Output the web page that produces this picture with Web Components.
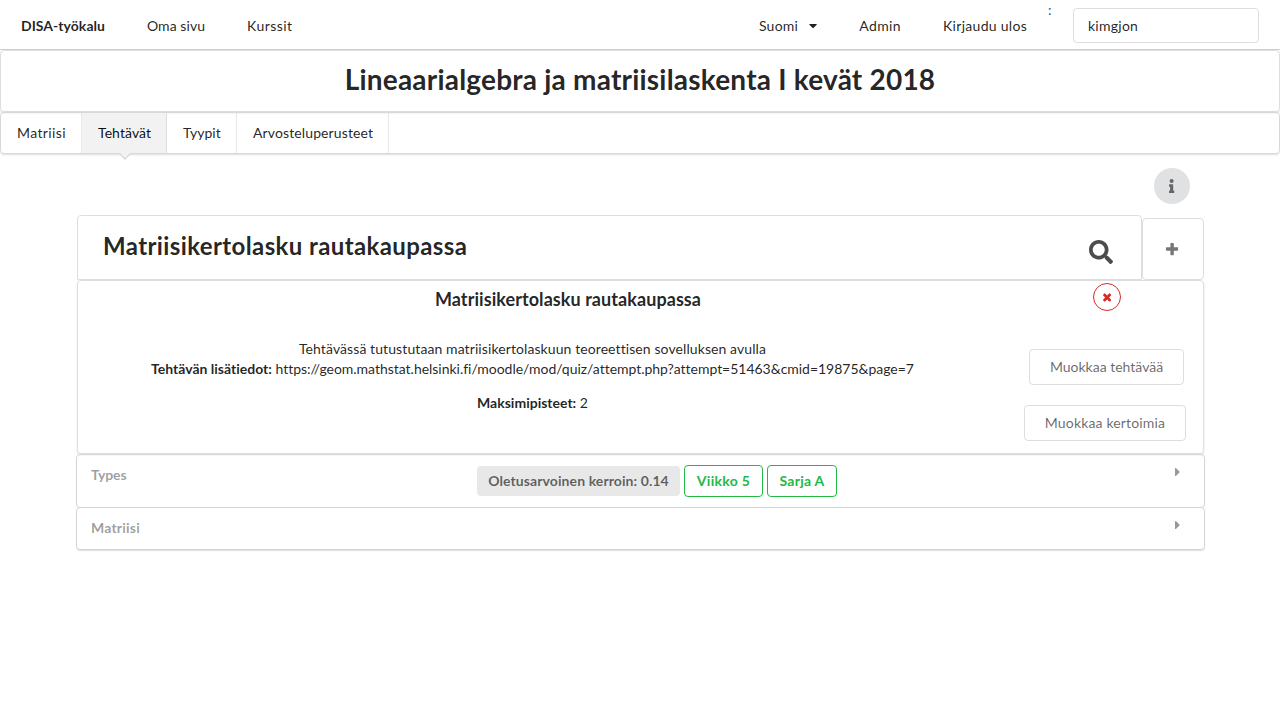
<!DOCTYPE html>
<html lang="fi">
<head>
<meta charset="utf-8">
<title>DISA-työkalu</title>
<style>
html, body { margin: 0; height: 100%; background: #fff; }
body { font: 14px/20px Lato, "Liberation Sans", sans-serif; color: rgba(0,0,0,.87); font-variant-ligatures: none; }
</style>
</head>
<body>
<disa-app></disa-app>
<script>
const define = (name, css, html) => customElements.define(name, class extends HTMLElement {
  constructor() {
    super();
    this.attachShadow({ mode: 'open' }).innerHTML = `<style>*{box-sizing:border-box}${css}</style>${html}`;
  }
});

const ICONS = {
  search: [512, 'M505 442.7L405.3 343c-4.5-4.5-10.6-7-17-7H372c27.6-35.3 44-79.7 44-128C416 93.1 322.9 0 208 0S0 93.1 0 208s93.1 208 208 208c48.3 0 92.7-16.4 128-44v16.3c0 6.4 2.5 12.5 7 17l99.7 99.7c9.4 9.4 24.6 9.4 33.9 0l28.3-28.3c9.4-9.4 9.4-24.6.1-34zM208 336c-70.7 0-128-57.2-128-128 0-70.7 57.2-128 128-128 70.7 0 128 57.2 128 128 0 70.7-57.2 128-128 128z'],
  info: [192, 'M20 424.229h20V279.771H20c-11.046 0-20-8.954-20-20V212c0-11.046 8.954-20 20-20h112c11.046 0 20 8.954 20 20v212.229h20c11.046 0 20 8.954 20 20V492c0 11.046-8.954 20-20 20H20c-11.046 0-20-8.954-20-20v-47.771c0-11.046 8.954-20 20-20zM96 0C56.235 0 24 32.235 24 72s32.235 72 72 72 72-32.235 72-72S135.764 0 96 0z'],
  plus: [448, 'M448 294.2v-76.4c0-13.3-10.7-24-24-24H286.2V56c0-13.3-10.7-24-24-24h-76.4c-13.3 0-24 10.7-24 24v137.8H24c-13.3 0-24 10.7-24 24v76.4c0 13.3 10.7 24 24 24h137.8V456c0 13.3 10.7 24 24 24h76.4c13.3 0 24-10.7 24-24V318.2H424c13.3 0 24-10.7 24-24z'],
  close: [384, 'M323.1 441l53.9-53.9c9.4-9.4 9.4-24.5 0-33.9L279.8 256l97.2-97.2c9.4-9.4 9.4-24.5 0-33.9L323.1 71c-9.4-9.4-24.5-9.4-33.9 0L192 168.2 94.8 71c-9.4-9.4-24.5-9.4-33.9 0L7 124.9c-9.4 9.4-9.4 24.5 0 33.9l97.2 97.2L7 353.2c-9.4 9.4-9.4 24.5 0 33.9L60.9 441c9.4 9.4 24.5 9.4 33.9 0l97.2-97.2 97.2 97.2c9.3 9.3 24.5 9.3 33.9 0z'],
  down: [320, 'M31.3 192h257.3c17.8 0 26.7 21.5 14.1 34.1L174.1 354.8c-7.8 7.8-20.5 7.8-28.3 0L17.2 226.1C4.6 213.5 13.5 192 31.3 192z'],
  right: [192, 'M0 384.662V127.338c0-17.818 21.543-26.741 34.142-14.142l128.662 128.662c7.81 7.81 7.81 20.474 0 28.284L34.142 398.804C21.543 411.404 0 402.48 0 384.662z']
};
customElements.define('ui-icon', class extends HTMLElement {
  connectedCallback() {
    if (this.shadowRoot) return;
    const [w, d] = ICONS[this.getAttribute('name')];
    this.attachShadow({ mode: 'open' }).innerHTML =
      `<style>:host{display:block;flex:none}svg{display:block;height:1em;width:${w / 512}em;fill:currentColor}</style>
       <svg viewBox="0 0 ${w} 512"><path d="${d}"/></svg>`;
  }
});

define('nav-item', `
  :host{display:flex;align-items:center;padding:2px 21px 0}
  :host([brand]){font-weight:700}`, `<slot></slot>`);

define('nav-bar', `
  :host{display:flex;height:50px;border-bottom:1px solid #d0d0d1}
  .grow{flex:1}
  ui-icon{font-size:13px;margin-left:11px}
  .l0{letter-spacing:.03px}.l1{letter-spacing:.07px}.l2{letter-spacing:.45px}.l3{letter-spacing:.2px}.l4{letter-spacing:.4px}.l5{letter-spacing:.29px}
  .colon{color:#1f5a78}
  .user{margin:8px 21px 0 21.5px;width:186px;height:35px;border:1px solid rgba(34,36,38,.15);border-radius:4px;padding:7px 14px;letter-spacing:.26px}`,
  `<nav-item brand class="l0">DISA-työkalu</nav-item><nav-item class="l1">Oma sivu</nav-item><nav-item class="l2">Kurssit</nav-item>
   <div class="grow"></div>
   <nav-item class="l3">Suomi<ui-icon name="down"></ui-icon></nav-item><nav-item class="l4">Admin</nav-item><nav-item class="l5">Kirjaudu ulos</nav-item>
   <div class="colon">:</div><div class="user">kimgjon</div>`);

define('course-title', `
  :host{display:block;box-sizing:border-box;height:62px;border:1px solid #dededf;border-radius:4px;box-shadow:0 1px 2px 0 rgba(34,36,38,.15);padding-top:10px}
  h1{margin:0;font:700 28px/36px Lato,"Liberation Sans",sans-serif;font-variant-ligatures:none;letter-spacing:.21px;text-align:center}`, `<h1><slot></slot></h1>`);

define('tab-item', `
  :host{display:block;position:relative;box-sizing:border-box;height:40px;padding:10px 0 0 16px;border-right:1px solid rgba(34,36,38,.1)}
  :host([active]){background:#f2f2f2;color:rgba(0,0,0,.95)}
  :host([active])::after{content:"";position:absolute;left:50%;top:100%;width:8px;height:8px;box-sizing:border-box;background:#f2f2f2;border:solid #d4d4d5;border-width:0 1px 1px 0;transform:translate(-50%,-50%) rotate(45deg);margin:.5px 0 0 1px}`, `<slot></slot>`);

define('tab-menu', `
  :host{display:flex;box-sizing:border-box;height:42px;border:1px solid #d8d8d9;border-radius:4px;box-shadow:0 1px 2px 0 rgba(34,36,38,.15)}`, `<slot></slot>`);

define('outline-button', `
  :host{display:flex;align-items:center;justify-content:center;box-sizing:border-box;height:36px;border:1px solid rgba(34,36,38,.15);border-radius:4px;padding:0 0 1px;color:rgba(0,0,0,.6);white-space:nowrap}`, `<slot></slot>`);

define('task-header', `
  :host{display:flex;align-items:flex-end}
  .title{display:flex;justify-content:space-between;align-items:center;width:1065px;height:65px;border:1px solid #dededf;border-radius:4px 4px 0 0;padding:0 28px 0 25px}
  h2{margin:0;padding-bottom:5px;font:700 24px/31px Lato,"Liberation Sans",sans-serif;font-variant-ligatures:none;letter-spacing:.39px}
  .s{font-size:24px;color:#4c4c4c;margin-top:9px}
  .plus{display:flex;align-items:center;justify-content:center;width:62px;height:62px;border:1px solid #dededf;border-radius:4px;color:#767676}
  .plus ui-icon{margin-right:2px}`,
  `<div class="title"><h2><slot></slot></h2><ui-icon class="s" name="search"></ui-icon></div>
   <div class="plus"><ui-icon name="plus"></ui-icon></div>`);

define('task-detail', `
  :host{display:grid;grid-template-columns:909px 218px;grid-template-rows:58px 1fr;box-sizing:border-box;height:174px;border:1px solid #dededf;border-radius:4px;box-shadow:0 1px 2px 0 rgba(34,36,38,.15)}
  .top{grid-column:1/3;display:flex;height:52px}
  h3{margin:0;padding-top:7px;width:980px;text-align:center;font:700 18px/23px Lato,"Liberation Sans",sans-serif;font-variant-ligatures:none;letter-spacing:.07px}
  .x{display:flex;align-items:center;justify-content:center;width:28px;height:28px;margin:2px 0 0 35px;border:1px solid #db2828;border-radius:50%;color:#db2828;font-size:11px;padding-top:1px}
  .text{text-align:center}
  p{margin:0 0 14px}
  .desc{letter-spacing:.09px}
  .url{letter-spacing:-.025px}
  .acts{display:flex;flex-direction:column;align-items:center;gap:20px;padding:10px 0 0 18px}
  .b1{width:155px;margin-left:3px}
  .b2{width:162px;letter-spacing:.16px}`,
  `<div class="top"><h3>Matriisikertolasku rautakaupassa</h3><div class="x"><ui-icon name="close"></ui-icon></div></div>
   <div class="text"><p><span class="desc">Tehtävässä tutustutaan matriisikertolaskuun teoreettisen sovelluksen avulla</span><br><b>Tehtävän lisätiedot:</b> <span class="url">https://geom.mathstat.helsinki.fi/moodle/mod/quiz/attempt.php?attempt=51463&amp;cmid=19875&amp;page=7</span></p><p><b>Maksimipisteet:</b> 2</p></div>
   <div class="acts"><outline-button class="b1">Muokkaa tehtävää</outline-button><outline-button class="b2">Muokkaa kertoimia</outline-button></div>`);

define('ui-label', `
  :host{display:flex;align-items:center;justify-content:center;box-sizing:border-box;height:30px;border-radius:4px;background:#e8e8e8;color:rgba(0,0,0,.6);font-weight:700;white-space:nowrap}
  :host([green]){height:32px;background:#fff;border:1px solid #21ba45;color:#21ba45}`, `<slot></slot>`);

define('fold-row', `
  :host{display:grid;grid-template-columns:1fr auto 1fr;box-sizing:border-box;border:1px solid #d6d6d7;border-radius:4px;color:rgba(0,0,0,.4);font-weight:700;padding:10px 24px 0 14px}
  ui-icon{justify-self:end}`,
  `<div><slot name="title"></slot></div><div><slot></slot></div><ui-icon name="right"></ui-icon>`);

define('disa-app', `
  :host{display:block}
  main{width:1128px;margin:0 auto;padding-top:14px}
  .info{display:flex;align-items:center;justify-content:center;width:36px;height:36px;margin:0 14px 11px auto;border-radius:50%;background:#e0e1e2;color:#666}
  .t1{width:81px;letter-spacing:.37px}.t2{width:85px;letter-spacing:.08px}.t3{width:70px}.t4{width:152px;letter-spacing:.12px}
  .inner{margin:0 0 0 1px}
  task-detail{width:1127px}
  .fold{width:1129px;border-radius:4px;box-shadow:0 1px 1px 0 rgba(34,36,38,.15)}
  .types{height:54px}
  .types span{letter-spacing:-.15px}
  .matrix{height:43px;margin-top:-1px}
  .matrix span{letter-spacing:.2px}
  .labels{display:flex;align-items:center;gap:4px;padding-left:43px}
  .w1{width:203px;letter-spacing:.09px}.w2{width:79px;letter-spacing:.3px}.w3{width:70px;letter-spacing:.25px}`,
  `<nav-bar></nav-bar>
   <course-title>Lineaarialgebra ja matriisilaskenta I kevät 2018</course-title>
   <tab-menu><tab-item class="t1">Matriisi</tab-item><tab-item class="t2" active>Tehtävät</tab-item><tab-item class="t3">Tyypit</tab-item><tab-item class="t4">Arvosteluperusteet</tab-item></tab-menu>
   <main><div class="info"><ui-icon name="info"></ui-icon></div>
   <div class="inner"><task-header>Matriisikertolasku rautakaupassa</task-header><task-detail></task-detail></div>
   <div class="fold">
    <fold-row class="types"><span slot="title">Types</span><div class="labels"><ui-label class="w1">Oletusarvoinen kerroin: 0.14</ui-label><ui-label green class="w2">Viikko 5</ui-label><ui-label green class="w3">Sarja A</ui-label></div></fold-row>
    <fold-row class="matrix"><span slot="title">Matriisi</span></fold-row>
   </div></main>`);
</script>
</body>
</html>
